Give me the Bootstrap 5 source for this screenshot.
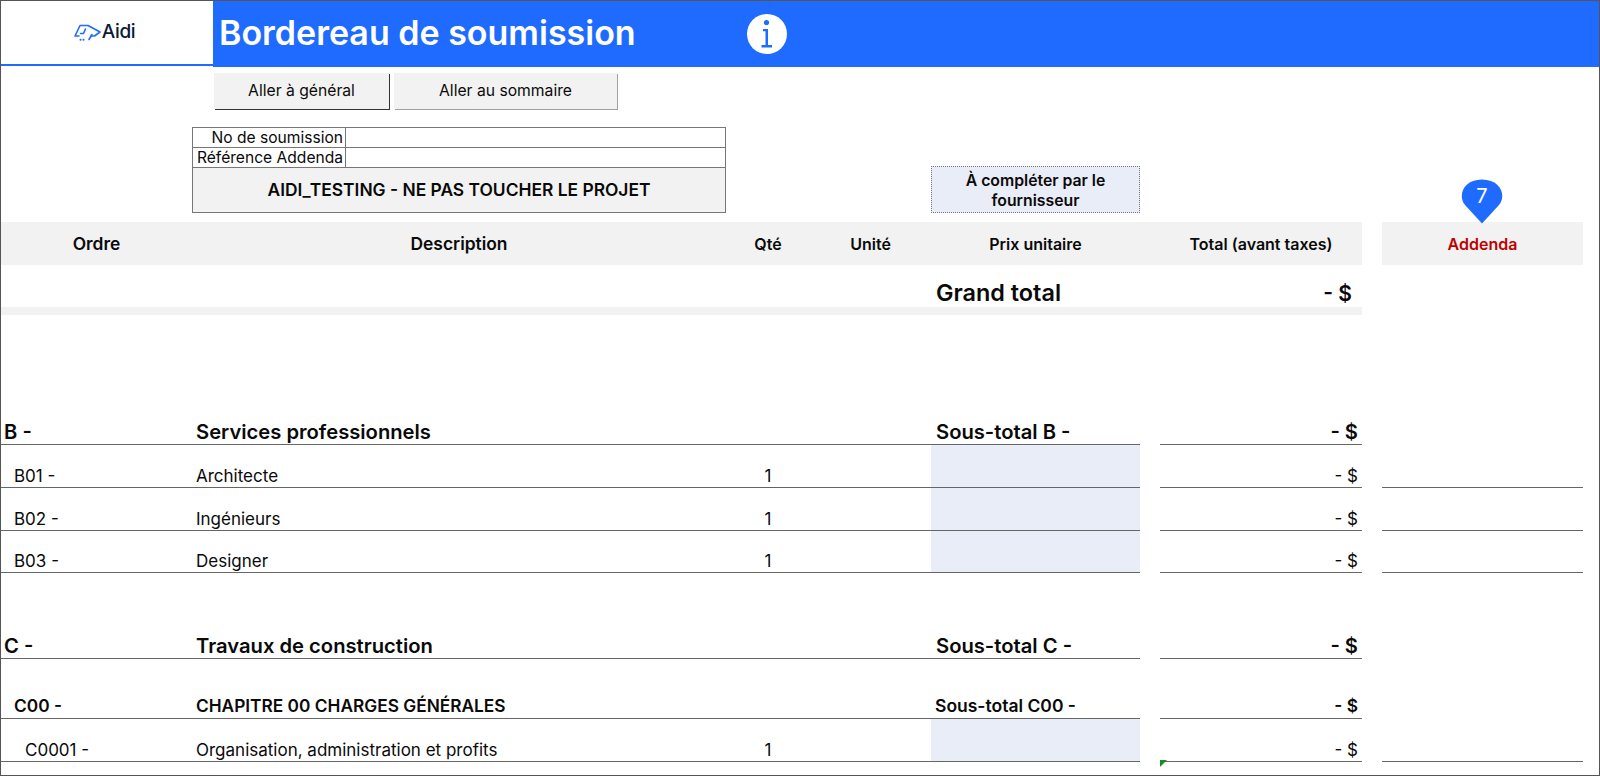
<!DOCTYPE html>
<html lang="fr">
<head>
  <meta charset="UTF-8" />
  <meta name="viewport" content="width=device-width, initial-scale=1.0" />
  <title>Bordereau de soumission</title>
  <link href="https://cdn.jsdelivr.net/npm/bootstrap@5.3.0/dist/css/bootstrap.min.css" rel="stylesheet" />
  <style>
    html, body {
      height: 100%;
      overflow: hidden;
    }
    body {
      font-family: Inter, "Liberation Sans", sans-serif;
      color: #0a0a0a;
    }
    .sheet {
      position: relative;
      height: 776px;
      border: 1px solid #555;
      overflow: hidden;
    }
    /* header */
    .top-bar {
      height: 66px;
    }
    .logo-cell {
      width: 212px;
      height: 65px;
      padding-right: 5px;
      border-bottom: 2px solid #1f6bff;
    }
    .logo-text {
      margin-left: 1px;
      font-size: 19px;
      font-weight: 500;
      color: #0c1836;
      letter-spacing: -0.3px;
    }
    .title-cell {
      background: #1f6bff;
      color: #fff;
    }
    .title-text {
      width: 534px;
      padding: 0 0 3px 6px;
      font-size: 34px;
      font-weight: 600;
    }
    /* buttons */
    .nav-btns {
      padding: 6px 0 0 213px;
      gap: 5px;
    }
    .sheet-btn {
      height: 36px;
      border: 0;
      border-radius: 0;
      padding: 0;
      background: #f2f2f2;
      color: #0a0a0a;
      font-size: 15.7px;
      box-shadow: 1px 1px 0 #a0a0a0;
    }
    .sheet-btn.first {
      width: 175px;
      box-shadow: 1px 1px 0 #333;
    }
    .sheet-btn.second {
      width: 223px;
    }
    /* project block */
    .project-row {
      margin-top: 18px;
      padding-left: 191px;
      height: 86px;
    }
    .project-table {
      width: 534px;
      height: 85px;
      table-layout: fixed;
      font-size: 15.6px;
    }
    .project-table td {
      padding: 0 2px;
      line-height: 18px;
      border: 1px solid #777;
      color: #0a0a0a;
      white-space: nowrap;
    }
    .project-table .field {
      width: 153px;
      height: 20px;
      text-align: right;
    }
    .project-table .project-name {
      height: 45px;
      background: #f2f2f2;
      text-align: center;
      font-weight: 600;
      font-size: 17.4px;
    }
    .supplier-box {
      width: 209px;
      height: 47px;
      margin-left: 205px;
      padding-top: 3px;
      background: #e9edf7;
      border: 1px dotted #777;
      font-size: 15.8px;
      font-weight: 600;
      line-height: 20px;
      text-align: center;
    }
    /* grid of the sheet */
    .line {
      display: grid;
      grid-template-columns: 191px 534px 84px 121px 209px 20px 202px 20px 201px 1fr;
    }
    .line > div {
      min-width: 0;
      white-space: nowrap;
    }
    .head-line {
      height: 43px;
      margin-top: 9px;
      font-size: 16px;
      font-weight: 600;
      align-items: stretch;
    }
    .head-line > div {
      display: flex;
      align-items: center;
      justify-content: center;
    }
    .head-line .wide-head {
      padding-top: 2px;
      font-size: 17.4px;
    }
    .band {
      background: #f2f2f2;
    }
    .addenda {
      color: #c00000;
    }
    .total-line {
      height: 42px;
      font-size: 21px;
      font-weight: 600;
      line-height: 26px;
      align-items: end;
    }
    .total-line .amount {
      text-align: right;
      padding-right: 10px;
    }
    .total-label {
      padding: 0 0 1px 5px;
      font-size: 23.4px;
    }
    .total-band {
      width: 1361px;
      height: 8px;
      background: #f2f2f2;
    }
    .gap-a { height: 87px; }
    .gap-b { height: 43px; }
    /* rows */
    .entry > div {
      display: flex;
      align-items: flex-end;
      line-height: 22px;
    }
    .entry .rule {
      border-bottom: 1px solid #666;
    }
    .entry .num {
      justify-content: flex-end;
      padding-right: 4px;
    }
    .entry .qty {
      justify-content: center;
    }
    .entry .desc {
      padding-left: 4px;
    }
    .lvl-0 { padding-left: 3px; }
    .lvl-1 { padding-left: 13px; }
    .lvl-2 { padding-left: 24px; }
    .section-row {
      height: 43px;
      font-size: 20.2px;
      font-weight: 600;
    }
    .chapter-row {
      height: 60px;
      font-size: 17.3px;
      font-weight: 600;
    }
    .section-row > div,
    .chapter-row > div {
      padding-bottom: 1px;
    }
    .chapter-row .sub-label {
      font-size: 17.5px;
      padding-left: 4px;
    }
    .section-row .sub-label {
      padding-left: 5px;
    }
    .item-row {
      height: 43px;
      font-size: 17px;
    }
    .item-row.short {
      height: 42px;
    }
    .fill {
      background: #e9edf7;
    }
    .sub-span {
      grid-column: 2 / span 3;
    }
    /* overlays */
    .addenda-pin {
      position: absolute;
      left: 1460px;
      top: 178px;
    }
    .pin-count {
      font-size: 20px;
      fill: #fff;
      font-family: Inter, "Liberation Sans", sans-serif;
    }
    .cell-flag {
      position: absolute;
      left: 1159px;
      top: 759px;
      width: 0;
      height: 0;
      border-top: 7px solid #1a8a2a;
      border-right: 7px solid transparent;
    }
  </style>
</head>
<body>
  <div class="sheet">
    <!-- Title bar -->
    <div class="top-bar d-flex">
      <div class="logo-cell d-flex align-items-center justify-content-center">
        <svg width="27" height="18" viewBox="0 0 27 18" fill="none" stroke="#1f6bff" stroke-width="1.6" stroke-linejoin="round" stroke-linecap="round">
          <path d="M5 12 H1 L6 1.5 H14 L26 8 L20.5 12 H17" />
          <path d="M11.5 5 L9.5 9.5 H6.5" />
          <path d="M15 15.5 L18 10.5" />
          <path d="M6.5 15.8 h.1 M9.5 15.8 h.1" stroke-width="2" />
        </svg>
        <span class="logo-text">Aidi</span>
      </div>
      <div class="title-cell flex-grow-1 d-flex align-items-center">
        <div class="title-text">Bordereau de soumission</div>
        <svg width="40" height="40" viewBox="0 0 40 40">
          <circle cx="20" cy="20" r="20" fill="#fff" />
          <circle cx="19.5" cy="8.5" r="2.6" fill="#1f6bff" />
          <path d="M16 15 H21 V31 H25 V33.5 H14.5 V31 H18.5 V17.2 H16 Z" fill="#1f6bff" />
        </svg>
      </div>
    </div>

    <div class="nav-btns d-flex">
      <button type="button" class="btn sheet-btn first">Aller à général</button>
      <button type="button" class="btn sheet-btn second">Aller au sommaire</button>
    </div>

    <div class="project-row d-flex align-items-end">
      <table class="project-table">
        <tr>
          <td class="field">No de soumission</td>
          <td></td>
        </tr>
        <tr>
          <td class="field">Référence Addenda</td>
          <td></td>
        </tr>
        <tr>
          <td class="project-name" colspan="2">AIDI_TESTING - NE PAS TOUCHER LE PROJET</td>
        </tr>
      </table>
      <div class="supplier-box d-flex align-items-center justify-content-center">À compléter par le<br />fournisseur</div>
    </div>

    <!-- Column headers -->
    <div class="line head-line">
      <div class="band wide-head">Ordre</div>
      <div class="band wide-head">Description</div>
      <div class="band">Qté</div>
      <div class="band">Unité</div>
      <div class="band">Prix unitaire</div>
      <div class="band"></div>
      <div class="band">Total (avant taxes)</div>
      <div></div>
      <div class="band addenda">Addenda</div>
    </div>

    <div class="line total-line">
      <div></div><div></div><div></div><div></div>
      <div class="total-label">Grand total</div>
      <div></div>
      <div class="amount">- $</div>
    </div>
    <div class="total-band"></div>

    <div class="gap-a"></div>

    <!-- B -->
    <div class="line entry section-row">
      <div class="rule lvl-0">B -</div>
      <div class="rule desc sub-span">Services professionnels</div>
      <div class="rule sub-label">Sous-total B -</div>
      <div></div>
      <div class="rule num">- $</div>
    </div>
    <div class="line entry item-row">
      <div class="rule lvl-1">B01 -</div>
      <div class="rule desc">Architecte</div>
      <div class="rule qty">1</div>
      <div class="rule"></div>
      <div class="rule fill"></div>
      <div></div>
      <div class="rule num">- $</div>
      <div></div>
      <div class="rule"></div>
    </div>
    <div class="line entry item-row">
      <div class="rule lvl-1">B02 -</div>
      <div class="rule desc">Ingénieurs</div>
      <div class="rule qty">1</div>
      <div class="rule"></div>
      <div class="rule fill"></div>
      <div></div>
      <div class="rule num">- $</div>
      <div></div>
      <div class="rule"></div>
    </div>
    <div class="line entry item-row short">
      <div class="rule lvl-1">B03 -</div>
      <div class="rule desc">Designer</div>
      <div class="rule qty">1</div>
      <div class="rule"></div>
      <div class="rule fill"></div>
      <div></div>
      <div class="rule num">- $</div>
      <div></div>
      <div class="rule"></div>
    </div>

    <div class="gap-b"></div>

    <!-- C -->
    <div class="line entry section-row">
      <div class="rule lvl-0">C -</div>
      <div class="rule desc sub-span">Travaux de construction</div>
      <div class="rule sub-label">Sous-total C -</div>
      <div></div>
      <div class="rule num">- $</div>
    </div>
    <div class="line entry chapter-row">
      <div class="rule lvl-1">C00 -</div>
      <div class="rule desc sub-span">CHAPITRE 00 CHARGES GÉNÉRALES</div>
      <div class="rule sub-label">Sous-total C00 -</div>
      <div></div>
      <div class="rule num">- $</div>
    </div>
    <div class="line entry item-row">
      <div class="rule lvl-2">C0001 -</div>
      <div class="rule desc">Organisation, administration et profits</div>
      <div class="rule qty">1</div>
      <div class="rule"></div>
      <div class="rule fill"></div>
      <div></div>
      <div class="rule num">- $</div>
      <div></div>
      <div class="rule"></div>
    </div>

    <!-- Overlays -->
    <svg class="addenda-pin" width="42" height="46" viewBox="0 0 42 46">
      <path d="M21 44.5 L4 26 C-3.5 17 2 0.5 21 0.5 C40 0.5 45.5 17 38 26 Z" fill="#1f6bff" />
      <text class="pin-count" x="21" y="24" text-anchor="middle">7</text>
    </svg>
    <div class="cell-flag"></div>
  </div>

  <script src="https://cdn.jsdelivr.net/npm/bootstrap@5.3.0/dist/js/bootstrap.bundle.min.js"></script>
</body>
</html>
